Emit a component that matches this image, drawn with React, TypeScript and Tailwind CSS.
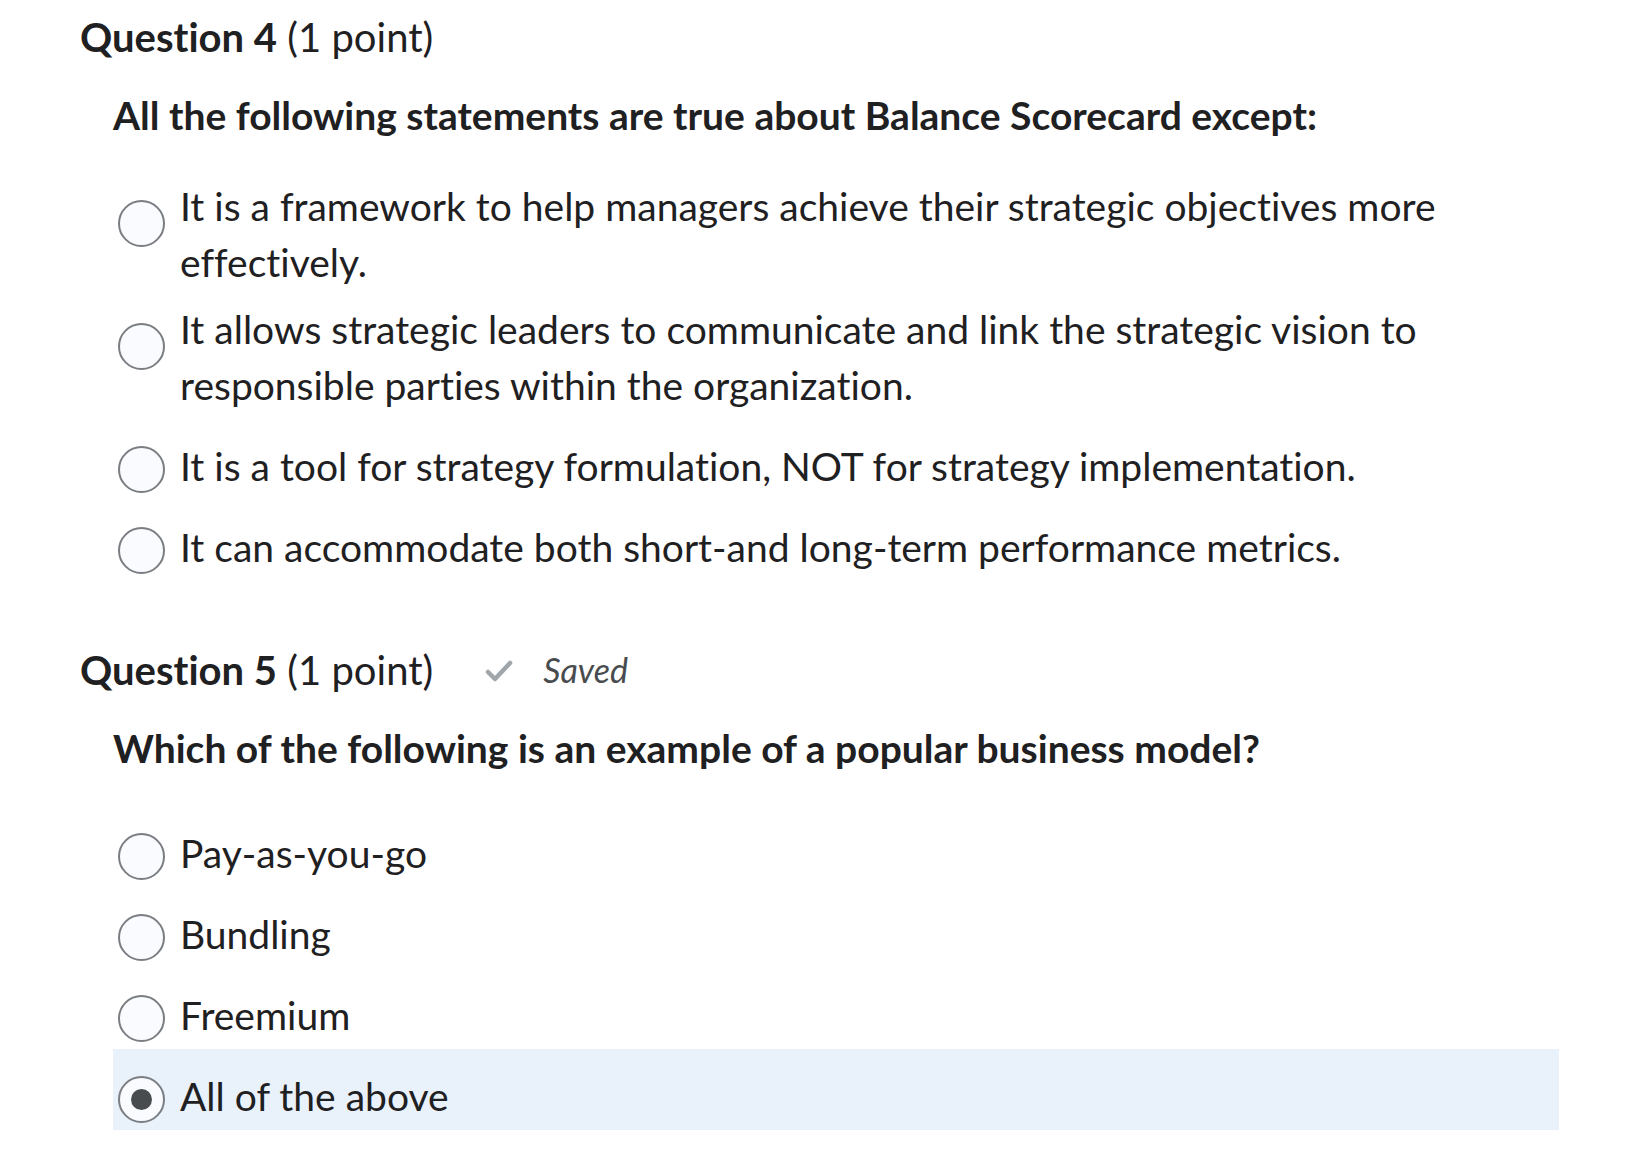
import React from "react";

type Opt = { text: string; multi?: boolean; selected?: boolean };

function Radio({ selected, multi }: { selected?: boolean; multi?: boolean }) {
  return (
    <div
      className={`shrink-0 w-[47px] h-[47px] rounded-full border-2 border-[#7a7e82] bg-[#f9fbff] flex items-center justify-center ${
        multi ? "mt-[22px]" : "mt-[8px]"
      }`}
    >
      {selected && <div className="w-[21px] h-[21px] rounded-full bg-[#494c4e]" />}
    </div>
  );
}

function Row({ o }: { o: Opt }) {
  return (
    <div
      className={`flex items-start pl-[5px] pb-[6px] ${o.multi ? "pt-[5px]" : "pt-[19px]"} ${
        o.selected ? "bg-[#e9f1fb]" : ""
      }`}
    >
      <Radio selected={o.selected} multi={o.multi} />
      <div className="ml-[15px] text-[39px] leading-[56px]">{o.text}</div>
    </div>
  );
}

function Check() {
  return (
    <svg width="28" height="24" viewBox="0 0 28 24" className="mt-[2px]">
      <polyline
        points="3,13 10,20 25,4"
        fill="none"
        stroke="#a0a6aa"
        strokeWidth="4.5"
        strokeLinecap="round"
        strokeLinejoin="round"
      />
    </svg>
  );
}

export default function App() {
  const q4: Opt[] = [
    { text: "It is a framework to help managers achieve their strategic objectives more effectively.", multi: true },
    {
      text: "It allows strategic leaders to communicate and link the strategic vision to responsible parties within the organization.",
      multi: true,
    },
    { text: "It is a tool for strategy formulation, NOT for strategy implementation." },
    { text: "It can accommodate both short-and long-term performance metrics." },
  ];
  const q5: Opt[] = [
    { text: "Pay-as-you-go" },
    { text: "Bundling" },
    { text: "Freemium" },
    { text: "All of the above", selected: true },
  ];
  return (
    <div className="min-h-[1175px] bg-white text-[#1f2022] font-['Lato',sans-serif] [font-variant-ligatures:none]">
      <div className="pl-[80px] pt-[14px]">
        <h2 className="text-[40px] leading-[46px]">
          <span className="font-bold">Question 4</span> <span>(1 point)</span>
        </h2>
        <div className="pl-[33px]">
          <p className="mt-[32px] font-bold text-[39px] leading-[46px]">
            All the following statements are true about Balance Scorecard except:
          </p>
          <div className="mt-[35px] w-[1446px]">
            {q4.map((o, i) => (
              <Row key={i} o={o} />
            ))}
          </div>
        </div>

        <div className="mt-[66px] flex items-center">
          <h2 className="text-[40px] leading-[46px]">
            <span className="font-bold">Question 5</span> <span>(1 point)</span>
          </h2>
          <div className="ml-[52px]">
            <Check />
          </div>
          <span className="ml-[30px] italic text-[34px] leading-[46px] text-[#494c4e]">Saved</span>
        </div>
        <div className="pl-[33px]">
          <p className="mt-[32px] font-bold text-[39px] leading-[46px]">
            Which of the following is an example of a popular business model?
          </p>
          <div className="mt-[35px] w-[1446px]">
            {q5.map((o, i) => (
              <Row key={i} o={o} />
            ))}
          </div>
        </div>
      </div>
    </div>
  );
}
